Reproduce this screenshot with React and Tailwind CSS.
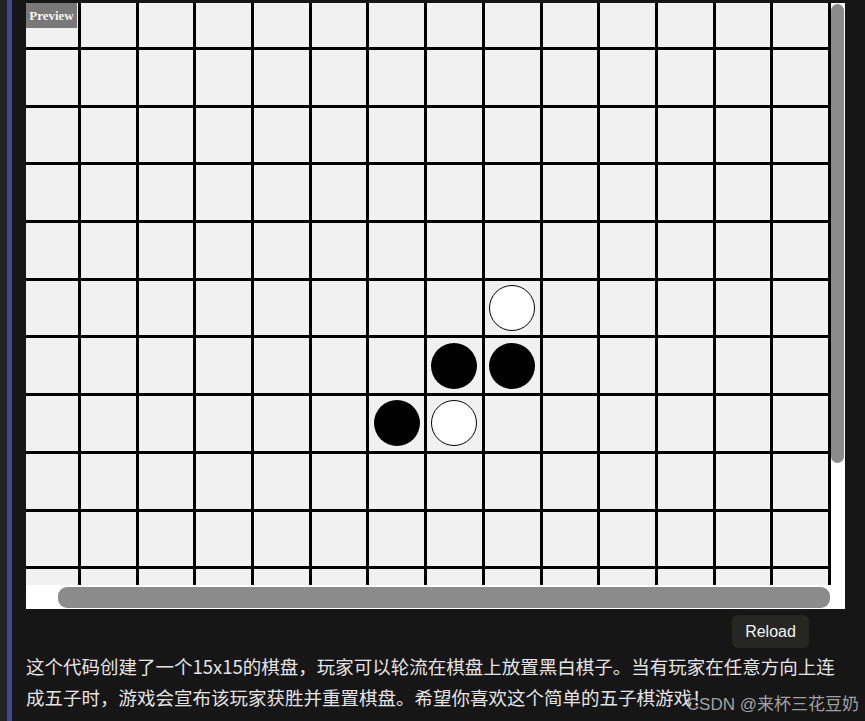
import React from "react";

const SIZE = 15;

// stones on the board: [row, col, color]
const stones = {
  "5-8": "white",
  "6-7": "black",
  "6-8": "black",
  "7-6": "black",
  "7-7": "white",
};

function Cell({ row, col }) {
  const stone = stones[`${row}-${col}`];
  return (
    <div className="flex items-center justify-center bg-[#f0f1f0]">
      {stone === "black" && <div className="h-[46px] w-[46px] rounded-full bg-black" />}
      {stone === "white" && (
        <div className="h-[46px] w-[46px] rounded-full border-[1.5px] border-black bg-white" />
      )}
    </div>
  );
}

function Board() {
  const cells = [];
  for (let r = 0; r < SIZE; r++) {
    for (let c = 0; c < SIZE; c++) {
      cells.push(<Cell key={`${r}-${c}`} row={r} col={c} />);
    }
  }
  return (
    <div className="ml-[-2.7px] mt-[-10.7px] grid w-max grid-cols-[repeat(15,54.7px)] auto-rows-[54.7px] gap-[3px] bg-black">
      {cells}
    </div>
  );
}

export default function App() {
  return (
    <div className="relative flex min-h-[721px] overflow-hidden bg-[#161616]">
      <div className="w-[7px] shrink-0 bg-[#22221f]" />
      <div className="w-[5px] shrink-0 bg-[#3b4798]" />

      <div className="flex-1 pl-[14px] pr-[20px] pt-[3px]">
        {/* preview frame */}
        <div className="grid h-[606px] w-[819px] grid-cols-[805px_14px] grid-rows-[582px_24px] bg-white">
          <div className="relative overflow-hidden bg-[#f0f1f0]">
            <Board />
            <div className="absolute left-0 top-0 flex h-[25px] w-[51px] items-center justify-center bg-[#787878] text-[13px] font-semibold text-[#f4f4f4] [font-family:'Liberation_Serif',serif]">
              Preview
            </div>
          </div>
          <div className="pt-[1px]">
            <div className="h-[459px] w-[13px] rounded-[7px] bg-[#8b8b8b]" />
          </div>
          <div className="pl-[32px] pt-[2px]">
            <div className="h-[21px] w-[772px] rounded-[9px] bg-[#8b8b8b]" />
          </div>
          <div />
        </div>

        <div className="mt-[6px] flex justify-end pr-[36px]">
          <button className="h-[33px] w-[77px] rounded-md bg-[#262622] text-[16px] font-medium text-[#f2f2f2] [font-family:'Liberation_Sans',Arial,sans-serif]">
            Reload
          </button>
        </div>

        <p className="mt-[3px] text-[18.5px] leading-[31px] text-[#e4e4e4] [font-family:'Noto_Sans_CJK_SC','Noto_Sans',sans-serif]">
          <span className="block whitespace-nowrap">
            这个代码创建了一个15x15的棋盘，玩家可以轮流在棋盘上放置黑白棋子。当有玩家在任意方向上连
          </span>
          <span className="block whitespace-nowrap">
            成五子时，游戏会宣布该玩家获胜并重置棋盘。希望你喜欢这个简单的五子棋游戏！
          </span>
        </p>
      </div>

      <div className="absolute bottom-[4px] right-[6px] text-[17px] text-[#c8c8c8]/80 [font-family:'Liberation_Sans','Noto_Sans_CJK_SC',sans-serif]">
        CSDN @来杯三花豆奶
      </div>
    </div>
  );
}
